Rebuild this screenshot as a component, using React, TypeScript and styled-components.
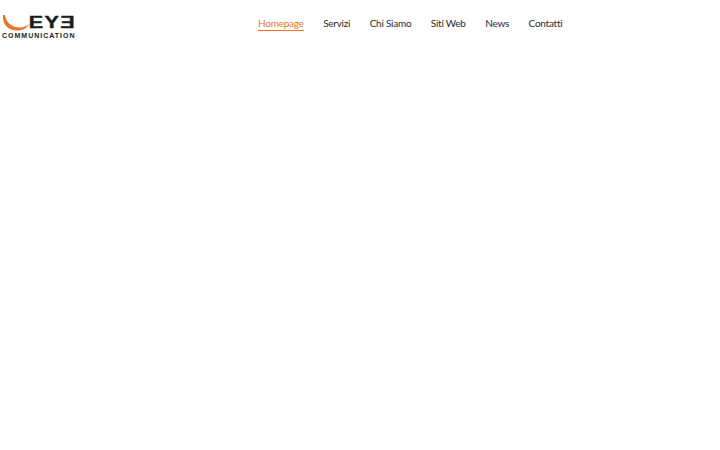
import React from "react"
import styled, { createGlobalStyle } from "styled-components"

const links = ["Homepage", "Servizi", "Chi Siamo", "Siti Web", "News", "Contatti"]

export default function App() {
  return (
    <>
      <GlobalStyle />
      <Header>
        <Logo>
          <Swoosh width="30" height="20" viewBox="0 0 30 20">
            <path d="M1 1 C0 10 6 16 14 16.500 C20 17 25 14 28 10 C24 13 19 14 14 13 C8 12 4 7 3 1 Z" fill="#e8762c" />
          </Swoosh>
          <LogoMark>EYƎ</LogoMark>
          <LogoText>COMMUNICATION</LogoText>
        </Logo>
        <Nav>
          {links.map((link, index) => (
            <NavLink key={link} $active={index === 0}>{link}</NavLink>
          ))}
        </Nav>
      </Header>
    </>
  )
}

const GlobalStyle = createGlobalStyle`
  html, body {
    margin: 0;
    background: #fff;
  }
`

const Header = styled("header")`
  display: flex;
  align-items: flex-start;
  width: 720px;
  height: 450px;
  box-sizing: border-box;
  padding: 14px 0 0 2px;
  background: #fff;
`

const Logo = styled("div")`
  position: relative;
  width: 74px;
  height: 24px;
  flex: none;
`

const Swoosh = styled("svg")`
  position: absolute;
  left: 0;
  top: 0;
`

const LogoMark = styled("div")`
  position: absolute;
  right: 0;
  top: 1px;
  font-family: "Liberation Sans", sans-serif;
  font-size: 16px;
  line-height: 15px;
  font-weight: 700;
  letter-spacing: 1px;
  color: #1d1d1d;
  -webkit-text-stroke: 0.4px #1d1d1d;
  transform: scaleX(1.35);
  transform-origin: right;
`

const LogoText = styled("div")`
  position: absolute;
  left: 0;
  bottom: -1px;
  font-family: "Liberation Sans", sans-serif;
  font-size: 7px;
  line-height: 7px;
  font-weight: 700;
  letter-spacing: 1px;
  color: #222;
  white-space: nowrap;
`

const Nav = styled("nav")`
  display: flex;
  gap: 19.5px;
  margin-left: 182px;
`

const NavLink = styled("a")<{ $active?: boolean }>`
  font-family: Lato, sans-serif;
  font-size: 10px;
  letter-spacing: -0.25px;
  line-height: 12px;
  padding: 3px 0 1px;
  color: ${p => (p.$active ? "#e8762c" : "#2b2b2b")};
  border-bottom: 1px solid ${p => (p.$active ? "#e8762c" : "transparent")};
`
